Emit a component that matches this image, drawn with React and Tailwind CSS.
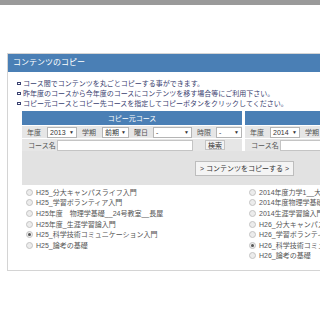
import React from 'react';

const FONT = "font-['Liberation_Sans','Noto_Sans_CJK_JP',sans-serif]";

const NOTES = [
  'コース間でコンテンツを丸ごとコピーする事ができます。',
  '昨年度のコースから今年度のコースにコンテンツを移す場合等にご利用下さい。',
  'コピー元コースとコピー先コースを指定してコピーボタンをクリックしてください。',
];

const FROM = [
  { label: 'H25_分大キャンパスライフ入門' },
  { label: 'H25_学習ボランティア入門' },
  { label: 'H25年度　物理学基礎__24号教室__長屋' },
  { label: 'H25年度_生涯学習論入門' },
  { label: 'H25_科学技術コミュニケーション入門', checked: true },
  { label: 'H25_論考の基礎' },
];

const TO = [
  { label: '2014年度力学1__大野' },
  { label: '2014年度物理学基礎' },
  { label: '2014生涯学習論入門' },
  { label: 'H26_分大キャンパスライフ入門' },
  { label: 'H26_学習ボランティア入門' },
  { label: 'H26_科学技術コミュニケーション入門', checked: true },
  { label: 'H26_論考の基礎' },
];

function Select({ value, width }) {
  return (
    <span
      className="flex items-center justify-between h-[11px] bg-white border border-[#b5b5b5] pl-[2px] pr-[2px] text-[#333]"
      style={{ width }}
    >
      <span>{value}</span>
      <span className="text-[5px]">▼</span>
    </span>
  );
}

function Radio({ checked }) {
  return (
    <span className="w-[7px] h-[7px] rounded-full border border-[#c4c4c4] bg-[#ececec] flex items-center justify-center shrink-0">
      {checked && <span className="w-[3px] h-[3px] rounded-full bg-[#555]" />}
    </span>
  );
}

function RadioList({ items }) {
  return (
    <div className="flex flex-col">
      {items.map((it) => (
        <div key={it.label} className="flex items-center h-[10.6px] gap-[3px] whitespace-nowrap">
          <Radio checked={it.checked} />
          <span className="text-[#555]">{it.label}</span>
        </div>
      ))}
    </div>
  );
}

function Filters({ year, title, showSearch }) {
  return (
    <div className="w-[220px] shrink-0 flex flex-col">
      <div className="h-[14px] bg-[#4a7fb5] text-white flex items-center justify-center">{title}</div>
      <div className="h-[13px] bg-[#e6e6e6] flex items-center text-[#555] border-t border-white">
        <span className="ml-[5px] w-[20px]">年度</span>
        <Select value={year} width="30px" />
        <span className="ml-[5px] w-[20px]">学期</span>
        <Select value="前期" width="27px" />
        <span className="ml-[5px] w-[19px]">曜日</span>
        <Select value="-" width="39px" />
        <span className="ml-[5px] w-[19px]">時限</span>
        <Select value="-" width="26px" />
      </div>
      <div className="h-[13px] bg-[#e6e6e6] flex items-center text-[#555] border-t border-white">
        <span className="ml-[6px] w-[29px]">コース名</span>
        <span className="w-[136px] h-[11px] bg-white border border-[#c4c4c4]" />
        {showSearch && (
          <span className="ml-[12px] h-[10px] px-[2px] flex items-center border border-[#c4c4c4] bg-[#f2f2f2] text-[#333]">
            検索
          </span>
        )}
      </div>
    </div>
  );
}

export default function App() {
  return (
    <div className={`w-[320px] h-[320px] overflow-hidden bg-white text-[7px] leading-none ${FONT}`}>
      <div className="h-[5px] bg-[#9a9a9a]" />
      <div className="h-[48px]" />
      <div className="ml-[7px] w-[340px] h-[218px] border border-[#d4d4d4] flex flex-col">
        <div className="h-[18px] bg-[#4a7fb5] text-white text-[8px] flex items-center pl-[5px]">
          コンテンツのコピー
        </div>
        <div className="pt-[6px] pl-[9px] flex flex-col">
          {NOTES.map((n) => (
            <div key={n} className="h-[10px] flex items-center gap-[2px] text-[#3a4170] whitespace-nowrap">
              <span className="w-[4px] h-[3px] border border-[#3a4170]" />
              <span>{n}</span>
            </div>
          ))}
        </div>
        <div className="mt-[3px] ml-[14px] flex flex-col">
          <div className="flex gap-[3px]">
            <Filters year="2013" title="コピー元コース" showSearch />
            <Filters year="2014" title="コピー先コース" />
          </div>
          <div className="h-[34px] bg-[#e2e2e2] flex items-center pl-[173px]">
            <span className="h-[15px] px-[4px] flex items-center border border-[#bdbdbd] bg-[#f4f4f4] text-[#333] whitespace-nowrap">
              &gt; コンテンツをコピーする &gt;
            </span>
          </div>
          <div className="mt-[2px] flex">
            <div className="w-[223px] shrink-0 pl-[4px]">
              <RadioList items={FROM} />
            </div>
            <div className="shrink-0 pl-[4px]">
              <RadioList items={TO} />
            </div>
          </div>
        </div>
      </div>
    </div>
  );
}
